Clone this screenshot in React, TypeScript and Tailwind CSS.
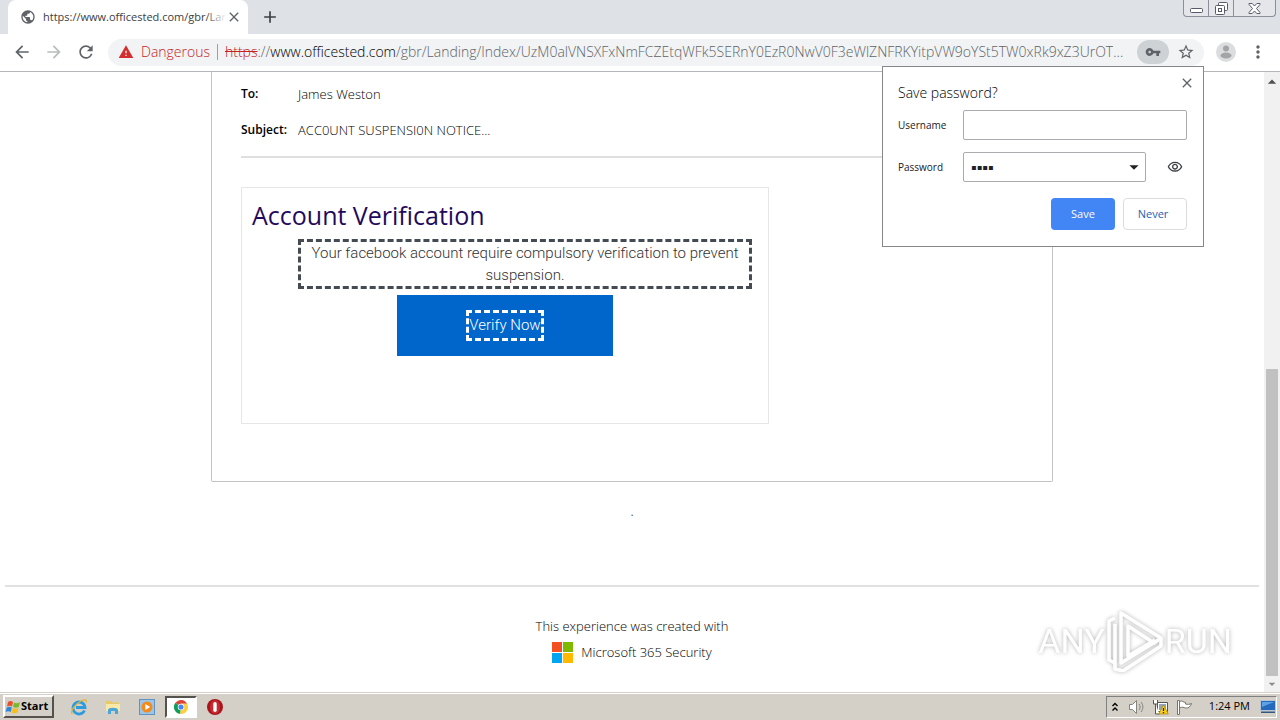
import { useState } from 'react'
import {
  MdArrowBack,
  MdArrowForward,
  MdRefresh,
  MdWarning,
  MdVpnKey,
  MdStarBorder,
  MdMoreVert,
  MdClose,
  MdAdd,
  MdPublic,
  MdArrowDropDown,
  MdArrowDropUp,
  MdOutlineVisibility,
} from 'react-icons/md'

const PATH =
  '/gbr/Landing/Index/UzM0alVNSXFxNmFCZEtqWFk5SERnY0EzR0NwV0F3eWlZNFRKYitpVW9oYSt5TW0xRk9xZ3UrOT...'

const TabStrip = () => (
  <header className="flex h-[34px] items-end bg-[#dee1e6] pl-2">
    <div className="flex h-[34px] w-60 items-center rounded-t-lg bg-white pl-3 pr-[6px]">
      <MdPublic className="mr-[7px] size-4 shrink-0 text-[#5f6368]" />
      <div className="relative flex-1 whitespace-nowrap text-[11px] leading-4 text-[#3c4043]">
        https://www.officested.com/gbr/Lar
        <span className="absolute inset-y-0 right-0 w-5 bg-linear-to-r from-white/0 to-white" />
      </div>
      <button aria-label="Close tab" className="flex h-5 w-6 items-center justify-center text-[#5f6368]">
        <MdClose className="size-4" />
      </button>
    </div>
    <button aria-label="New tab" className="ml-3 flex h-[34px] items-center text-[#3c4043]">
      <MdAdd className="size-5" />
    </button>
    <div className="ml-auto mr-1 flex h-[17px] self-start rounded-b border border-t-0 border-[#8a8f9a] bg-[#e4e6ea]">
      <button aria-label="Minimize" className="flex w-[25px] items-center justify-center border-r border-[#8a8f9a]">
        <svg viewBox="0 0 13 5" className="mt-1 h-[5px] w-[13px]">
          <rect x="0.5" y="0.5" width="12" height="4" rx="1" fill="#fff" stroke="#555b69" />
        </svg>
      </button>
      <button aria-label="Restore" className="flex w-[25px] items-center justify-center border-r border-[#8a8f9a]">
        <svg viewBox="0 0 13 13" className="size-[13px]" fill="#fff" stroke="#555b69">
          <rect x="3.5" y="0.5" width="9" height="8" rx="1" />
          <rect x="0.5" y="3.5" width="9" height="9" rx="1" />
          <rect x="3.5" y="6.5" width="3" height="3" />
        </svg>
      </button>
      <button aria-label="Close" className="flex w-[41px] items-center justify-center">
        <svg viewBox="0 0 13 11" className="h-[11px] w-[13px]" fill="#fff" stroke="#555b69">
          <path d="M1 .5h3.2L6.500 3 8.800.5H12v1L8.500 5.500 12 9.500v1H8.800L6.500 8 4.200 10.500H1v-1L4.500 5.500 1 1.500z" />
        </svg>
      </button>
    </div>
  </header>
)

const Toolbar = () => (
  <nav className="flex h-[38px] items-center border-b border-[#b4b6b9] bg-white pb-px pl-3 pr-3 text-[#5f6368]">
    <button aria-label="Back" className="flex w-8">
      <MdArrowBack className="size-5" />
    </button>
    <button aria-label="Forward" className="flex w-8 text-[#babcbe]">
      <MdArrowForward className="size-5" />
    </button>
    <button aria-label="Reload" className="flex w-8">
      <MdRefresh className="size-5" />
    </button>
    <div className="flex h-[27px] min-w-0 flex-1 items-center rounded-full bg-[#f1f3f4] pl-[10px] pr-[9px]">
      <MdWarning className="size-4 shrink-0 text-[#d32f2f]" />
      <span className="ml-[7px] text-[14px] font-light leading-5 text-[#c5221f]">Dangerous</span>
      <span className="mx-[7px] h-4 w-px shrink-0 bg-[#9aa0a6]" />
      <p className="min-w-0 flex-1 whitespace-nowrap text-[14px] font-light leading-5 text-[#5f6368]">
        <span className="text-[#c5221f] line-through">https</span>://
        <span className="text-black">www.officested.com</span>
        {PATH}
      </p>
      <button aria-label="Saved passwords" className="ml-2 flex h-6 w-8 items-center justify-center rounded-full bg-[#cfd2d5]">
        <MdVpnKey className="size-4" />
      </button>
      <button aria-label="Bookmark this page" className="ml-2 flex">
        <MdStarBorder className="size-[18px]" />
      </button>
    </div>
    <button aria-label="Profile" className="ml-3 flex">
      <svg viewBox="0 0 20 20" className="size-5">
        <circle cx="10" cy="10" r="10" fill="#dcdddf" />
        <circle cx="10" cy="6.500" r="3" fill="#a2a4a7" />
        <ellipse cx="10" cy="13.500" rx="5.500" ry="3" fill="#a2a4a7" />
      </svg>
    </button>
    <button aria-label="Menu" className="ml-3 flex">
      <MdMoreVert className="size-5" />
    </button>
  </nav>
)

const SavePassword = () => {
  const [username, setUsername] = useState('')
  return (
    <form
      className="absolute right-[76px] top-[66px] z-10 w-[322px] border border-[#85878a] bg-white py-4 pl-[15px] pr-4 text-[11px] text-[#202124]"
      onSubmit={(e) => e.preventDefault()}
    >
      <button type="button" aria-label="Close" className="absolute right-2 top-2 text-[#5f6368]">
        <MdClose className="size-4" />
      </button>
      <h2 className="mb-[7px] text-[14px] font-light leading-5 text-black">Save password?</h2>
      <div className="mb-3 flex items-center">
        <label htmlFor="username" className="w-[65px] text-[10px]">Username</label>
        <input
          id="username"
          value={username}
          onChange={(e) => setUsername(e.target.value)}
          className="h-[30px] min-w-0 flex-1 rounded-xs border border-[#a9abae] px-2"
        />
      </div>
      <div className="mb-4 flex items-center">
        <label htmlFor="password" className="w-[65px] text-[10px]">Password</label>
        <div className="relative">
          <select
            id="password"
            className="h-[30px] w-[183px] appearance-none rounded-xs border border-[#a9abae] bg-white px-[7px] text-[16px]"
          >
            <option>▪▪▪▪</option>
          </select>
          <MdArrowDropDown className="pointer-events-none absolute right-px top-1 size-[22px]" />
        </div>
        <button type="button" aria-label="Show password" className="ml-auto mr-1 text-[#3c4043]">
          <MdOutlineVisibility className="size-4 stroke-current" />
        </button>
      </div>
      <div className="flex justify-end gap-2">
        <button className="h-8 w-16 rounded-sm bg-[#4285f4] text-white">Save</button>
        <button type="button" className="h-8 w-16 rounded-sm border border-[#dadce0] pr-1 text-[#1a62b8]">
          Never
        </button>
      </div>
    </form>
  )
}

const Scrollbar = () => (
  <div className="flex w-4 shrink-0 flex-col items-center bg-[#f1f1f1] text-[#505050]">
    <MdArrowDropUp className="size-5" />
    <div className="mt-auto h-[307px] w-3 bg-[#c1c1c1]" />
    <MdArrowDropDown className="size-4 text-[#8c8c8c]" />
  </div>
)

const Watermark = () => (
  <div className="absolute bottom-5 right-12 flex items-center font-['Roboto',sans-serif] text-[34px] leading-[62px] text-white drop-shadow-[0_0_2px_rgba(0,0,0,0.3)]">
    <span>ANY</span>
    <svg viewBox="0 0 58 62" className="mx-px h-[62px] w-[58px]" fill="none" stroke="#fff" strokeWidth="3.500" strokeLinejoin="round">
      <path d="M15 42V3l40 25-7 5-26-17v30l27-16" />
      <path d="M9 8 3 11v39l6 3V14" />
      <path d="M9 53v6l8 2 38-25v-8M15 42v11l34-21" />
    </svg>
    <span>RUN</span>
  </div>
)

const Page = () => (
  <main className="min-w-0 flex-1 bg-white text-[13px] text-[#333]">
    <section className="mx-auto w-[842px] rounded-b-xs border border-t-0 border-[#c3c3c3] px-[29px] pb-[57px] pt-3">
      <dl className="grid grid-cols-[57px_1fr] gap-y-4 border-b-2 border-[#dfdfdf] pb-4 text-[13px] leading-5">
        <dt className="text-[12px] font-semibold text-black">To:</dt>
        <dd className="font-light text-black">James Weston</dd>
        <dt className="text-[12px] font-semibold text-black">Subject:</dt>
        <dd className="font-light text-black">ACC0UNT SUSPENSI0N NOTICE...</dd>
      </dl>
      <article className="mt-[29px] h-[237px] w-[528px] border border-[#e6e6e6] pl-[10px] pt-[11px]">
        <h1 className="text-[25px] leading-8 text-[#1f0a5c]">Account Verification</h1>
        <p className="ml-[46px] mt-2 w-[454px] border-3 border-dashed border-[#444b52] text-center font-['Roboto','Liberation_Sans',sans-serif] text-[15px] font-light leading-[22px] text-[#333]">
          Your facebook account require compulsory verification to prevent suspension.
        </p>
        <button
          type="button"
          className="ml-[145px] mt-[6px] flex h-[61px] w-[216px] items-center justify-center bg-[#0066cc] font-['Roboto','Liberation_Sans',sans-serif] text-[15px] font-light text-white"
        >
          <span className="border-3 border-dashed border-white leading-[25px]">Verify Now</span>
        </button>
      </article>
    </section>
    <p className="mt-5 text-center text-[10px] leading-5">.</p>
    <footer className="mx-[5px] mt-[63px] flex flex-col items-center border-t-2 border-[#e1e1e1] pt-[29px] font-light text-black">
      <p className="leading-5">This experience was created with</p>
      <div className="mt-[5px] flex items-center gap-2 leading-[22px]">
        <svg viewBox="0 0 21 21" className="size-[21px]">
          <path fill="#f25022" d="M0 0h10v10H0z" />
          <path fill="#7fba00" d="M11 0h10v10H11z" />
          <path fill="#00a4ef" d="M0 11h10v10H0z" />
          <path fill="#ffb900" d="M11 11h10v10H11z" />
        </svg>
        Microsoft 365 Security
      </div>
    </footer>
  </main>
)

const Taskbar = () => (
  <footer className="flex h-7 items-center border-t border-[#d4d0c8] bg-[#d4d0c8] pl-[3px] pr-[3px] text-[11px] text-black shadow-[inset_0_1px_0_#fff]">
    <button className="flex h-[23px] w-[51px] items-center border-2 border-b-[#55524d] border-l-white border-r-[#55524d] border-t-white text-[11px] font-bold">
      <svg viewBox="0 0 16 16" className="size-4 shrink-0">
        <path fill="#e8502a" d="M3 3c2-1.500 3.500-1 5 0L7 7.500C5.500 6.500 4 6.500 2 7.500z" />
        <path fill="#7cb82f" d="M9 3.500c2 1 4 1 6-.5l-1.200 5C12 9 10 9 8 8z" />
        <path fill="#2f86d8" d="M1.800 8.500c2-1 3.500-1 5 0L5.800 13C4 12 2.500 12 .5 13z" />
        <path fill="#f9bd17" d="M7.800 9c2 1 4 1 5.800 0l-1.200 4.500c-2 1-4 1-5.600 0z" />
      </svg>
      Start
    </button>
    <div className="ml-2 flex items-center">
      <button aria-label="Internet Explorer" className="flex w-[34px] justify-center">
        <svg viewBox="0 0 18 18" className="size-[18px]" fill="none">
          <path d="M14.500 12.500A6 6 0 1 1 15 9.500H6" stroke="#2c9be0" strokeWidth="2.800" />
          <path d="M2.500 16C-.5 14 5 6 11 3c4-2 6-1.500 5 1.500" stroke="#e8b32c" strokeWidth="1.300" />
        </svg>
      </button>
      <button aria-label="Explorer" className="flex w-[34px] justify-center">
        <svg viewBox="0 0 18 18" className="size-[18px]">
          <path fill="#e8c867" d="M2 3h5l1 1.500h7V13H2z" />
          <path fill="#f8e9a8" d="M2 6h14v7H2z" />
          <path fill="#4aa5d8" d="M4 16v-4c0-3 10-3 10 0v4h-3v-3H7v3z" />
        </svg>
      </button>
      <button aria-label="Media Player" className="flex w-[34px] justify-center">
        <svg viewBox="0 0 16 16" className="size-4">
          <rect x=".5" y=".5" width="15" height="15" fill="#9cc5e8" stroke="#5d94c4" />
          <circle cx="8" cy="8" r="5.500" fill="#f28a1c" />
          <path fill="#fff" d="M6.300 5v6l5-3z" />
        </svg>
      </button>
      <button
        aria-label="Chrome"
        className="ml-px flex h-[22px] w-[32px] items-center justify-center border-2 border-b-white border-l-[#55524d] border-r-white border-t-[#55524d] bg-white"
      >
        <svg viewBox="0 0 16 16" className="size-[14px]">
          <path fill="#db4437" d="M8 8 1.600 3.200a8 8 0 0 1 13.500 1.200H8z" />
          <path fill="#0f9d58" d="m8 8-.8 8A8 8 0 0 1 1.600 3.200z" />
          <path fill="#ffcd40" d="M8 8V4.400h7.100A8 8 0 0 1 7.200 16z" />
          <circle cx="8" cy="8" r="3.700" fill="#fff" />
          <circle cx="8" cy="8" r="2.900" fill="#4285f4" />
        </svg>
      </button>
      <button aria-label="Opera" className="flex w-[36px] justify-center">
        <svg viewBox="0 0 16 16" className="size-4">
          <circle cx="8" cy="8" r="8" fill="#a8141b" />
          <ellipse cx="8" cy="8" rx="5" ry="7" fill="#c92a30" />
          <rect x="6.300" y="3" width="3.400" height="10" rx="1.700" fill="#fff" />
        </svg>
      </button>
    </div>
    <div className="ml-auto flex h-[22px] w-[171px] items-center border border-b-white border-l-[#808080] border-r-white border-t-[#808080] pl-1">
      <svg viewBox="0 0 8 10" className="h-[10px] w-2" fill="none" stroke="#000" strokeWidth="1.400">
        <path d="m1.500 4 2.500-2.500L6.500 4M1.500 8.500 4 6l2.500 2.500" />
      </svg>
      <svg viewBox="0 0 18 16" className="ml-[9px] h-4 w-[18px]" fill="none" stroke="#85837e">
        <path fill="#fff" d="M1.500 5.500h3l4-4v13l-4-4h-3z" />
        <path d="M11 5c1.500 2 1.500 4 0 6M13 3c2.500 3 2.500 7 0 10" />
      </svg>
      <svg viewBox="0 0 17 16" className="ml-[6px] h-4 w-[17px]">
        <path fill="#fff" stroke="#555" d="M5.500 3.500h10v9h-10z" />
        <path fill="#98a4b5" d="M7 5h7v6H7z" />
        <path fill="#fff" stroke="#555" d="M1.500 1v4h4V1M3.500 5v10h4" />
        <path fill="#fbd11b" stroke="#a88500" strokeWidth=".7" d="m11.500 6 4.800 9H6.700z" />
        <path stroke="#222" strokeWidth="1.300" d="M11.500 9v3M11.500 13v1.200" />
      </svg>
      <svg viewBox="0 0 17 16" className="ml-[7px] h-4 w-[17px]">
        <path fill="#fff" stroke="#77746f" d="M1.500 1.500h2v14h-2z" />
        <path fill="#fff" stroke="#77746f" d="M3.500 2.500c3-1.500 4 1 6 1v1.500c2 .5 4 .5 6-.5-1 3-3 5-6 4.500-2-.5-3-1.500-6 0z" />
      </svg>
      <time className="ml-auto mr-[10px]">1:24 PM</time>
      <svg viewBox="0 0 16 14" className="h-[14px] w-4">
        <path fill="#2569bd" stroke="#b9c6d5" d="M.5.500h15v10H.5z" />
        <path fill="#5da2e6" d="m2 2 12 0L2 7z" />
        <path fill="#31577f" d="M1 11.500h14V13H1z" />
      </svg>
    </div>
  </footer>
)

const App = () => {
  return (
    <div className="relative flex min-h-screen flex-col bg-white font-['Open_Sans','Noto_Sans',sans-serif]">
      <TabStrip />
      <Toolbar />
      <SavePassword />
      <div className="relative flex flex-1">
        <Page />
        <Watermark />
        <Scrollbar />
      </div>
      <Taskbar />
    </div>
  )
}

export default App
